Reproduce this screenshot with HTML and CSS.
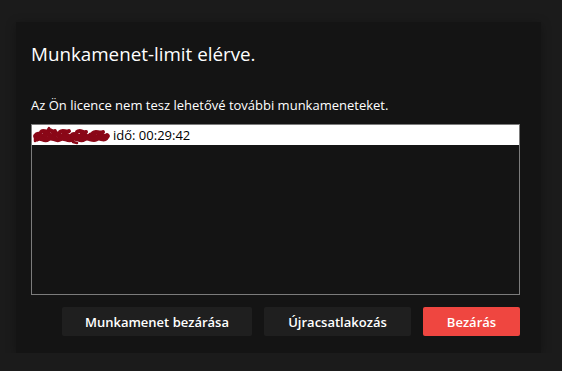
FILE: index.html
```html
<!DOCTYPE html>
<html lang="hu">
<head>
  <meta charset="UTF-8" />
  <title>Munkamenet-limit</title>
  <link rel="stylesheet" href="styles.css">
</head>
<body>
  <div class="dialog">
    <h1 class="dialog__title">Munkamenet-limit elérve.</h1>
    <p class="dialog__text">Az Ön licence nem tesz lehetővé további munkameneteket.</p>

    <div class="session-list">
      <div class="session-list__item selected">
        <!-- redacted user name -->
        <svg class="redact" width="77" height="19" viewBox="0 0 77 19">
          <g fill="none" stroke="#8a0717" stroke-linecap="round" stroke-linejoin="round">
            <path stroke-width="5.5" d="M3 10 C6 5 9 14 12 9 C15 4 18 14 21 9 C24 5 27 13 30 10 C33 6 36 14 39 10 C42 6 45 13 48 10 C51 6 54 14 57 10 C60 6 63 14 66 10 C69 7 71 13 74 10"/>
            <path stroke-width="5" d="M4 13 C8 10 11 16 15 13 C19 9 23 16 27 13 C31 10 35 16 39 13 C43 10 47 16 51 13 C55 10 59 15 63 13 C67 10 70 15 73 12"/>
            <path stroke-width="4" d="M8 6 C10 3 13 7 15 5 C17 2 19 7 22 5 M27 6 C30 3 33 7 36 5 M44 6 C47 3 50 7 53 6 M60 7 C63 4 66 8 70 6"/>
            <path stroke-width="2.5" d="M15 4 L16 2 M2 11 L2 15 M40 16 L44 17"/>
          </g>
        </svg>
        <span>idő: 00:29:42</span>
      </div>
    </div>

    <div class="dialog__actions">
      <button class="btn btn--wide">Munkamenet bezárása</button>
      <button class="btn btn--mid">Újracsatlakozás</button>
      <button class="btn btn--danger">Bezárás</button>
    </div>
  </div>
</body>
</html>
```
FILE: styles.css
```css
:root {
  --page-bg: #1b1b1b;
  --dialog-bg: #141414;
  --text-color: #ffffff;
  --list-border: #7c7c7c;
  --btn-bg: #1f1f1f;
  --danger-bg: #ef4640;
}

body {
  margin: 0;
  padding: 22px 0 0 16px;
  background-color: var(--page-bg);
  color: var(--text-color);
  font-family: 'Open Sans', 'Noto Sans', sans-serif;
}

.dialog {
  width: 525px;
  height: 331px;
  box-sizing: border-box;
  padding: 18px 21px 0 15px;
  background-color: var(--dialog-bg);
  box-shadow: 0 2px 10px rgba(0, 0, 0, 0.3);
  display: flex;
  flex-direction: column;
}

.dialog__title {
  margin: 0;
  font-size: 18.8px;
  font-weight: 400;
  line-height: 28px;
}

.dialog__text {
  margin: 28px 0 0;
  font-size: 13px;
  line-height: 18px;
}

.session-list {
  margin-top: 10px;
  height: 171px;
  box-sizing: border-box;
  border: 1px solid var(--list-border);
}

.session-list__item {
  height: 20px;
  display: flex;
  align-items: center;
  gap: 3px;
  padding-left: 1px;
  font-size: 13px;
  color: #000;
}

.session-list__item.selected {
  background-color: #fff;
}

.redact {
  display: block;
}

.dialog__actions {
  margin-top: 12px;
  display: flex;
  justify-content: flex-end;
  gap: 12px;
}

.btn {
  height: 29px;
  border: none;
  border-radius: 2px;
  background-color: var(--btn-bg);
  color: var(--text-color);
  font-family: 'Open Sans', 'Noto Sans', sans-serif;
  font-size: 13px;
  font-weight: 600;
  padding: 0;
}

.btn--wide {
  width: 190px;
}

.btn--mid {
  width: 147px;
}

.btn--danger {
  width: 97px;
  background-color: var(--danger-bg);
}
```
